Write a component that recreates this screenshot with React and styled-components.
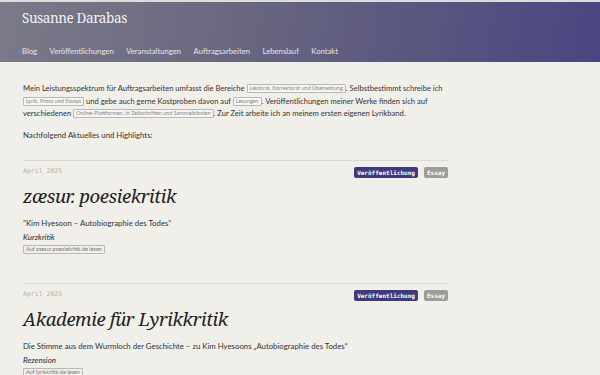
import React from "react";
import styled, { createGlobalStyle } from "styled-components";

const GlobalStyle = createGlobalStyle`
  html, body {
    margin: 0;
    padding: 0;
    background: #f1efea;
  }
  body {
    font-family: Lato, "Noto Sans", sans-serif;
    color: #333;
  }
`;

const Header = styled.header`
  border-top: 2px solid #dcdcdc;
  height: 60px;
  background: linear-gradient(100deg, #7b7a8a 0%, #68677f 40%, #4a4581 100%);
  padding: 0 22px;
  display: flex;
  flex-direction: column;
`;

const SiteTitle = styled.a`
  font-family: "Noto Serif", "DejaVu Serif", serif;
  font-size: 13.5px;
  color: #f2f2f5;
  text-decoration: none;
  margin-top: 7px;
  letter-spacing: -0.4px;
`;

const Nav = styled.nav`
  display: flex;
  gap: 12.5px;
  margin-top: 19px;
`;

const NavLink = styled.a`
  font-size: 7.7px;
  color: #e4e4ec;
  text-decoration: none;
`;

const Main = styled.main`
  width: 425px;
  padding: 20px 0 0 23px;
`;

const Intro = styled.p`
  font-size: 7.6px;
  line-height: 12.6px;
  margin: 0;
`;

const Tag = styled.span`
  display: inline-block;
  font-size: 5.5px;
  line-height: 7px;
  color: #888;
  border: 1px solid #b8b8b8;
  border-radius: 1px;
  padding: 0 2px;
  background: #f6f5f2;
  vertical-align: 1px;
`;

const Lead = styled.p`
  font-size: 7.75px;
  margin: 10px 0 0;
`;

const Entry = styled.article`
  border-top: 1px solid #dcdad5;
  margin-top: ${(p) => (p.$first ? "20px" : "29px")};
  padding-top: 5px;
`;

const MetaRow = styled.div`
  display: flex;
  justify-content: space-between;
  align-items: flex-start;
`;

const Date = styled.span`
  font-family: "DejaVu Sans Mono", monospace;
  font-size: 6.5px;
  color: #b3b1ac;
  margin-top: 1px;
`;

const Badges = styled.div`
  display: flex;
  gap: 6px;
  margin-top: 1px;
`;

const Badge = styled.span`
  font-family: "DejaVu Sans Mono", monospace;
  font-weight: bold;
  font-size: 6px;
  line-height: 7px;
  color: #fff;
  background: ${(p) => (p.$muted ? "#9d9c9a" : "#3f3a7c")};
  padding: 2px 3px;
  border-radius: 2px;
`;

const Title = styled.h2`
  font-family: "Noto Serif", "DejaVu Serif", serif;
  font-style: italic;
  font-weight: normal;
  font-size: 18.5px;
  line-height: 24px;
  color: #222;
  margin: 6px 0 0;
  letter-spacing: -0.4px;
`;

const Subtitle = styled.p`
  font-size: 7.8px;
  margin: 10px 0 0;
`;

const Kind = styled.p`
  font-size: 8px;
  font-style: italic;
  color: #2a2a2a;
  margin: 4px 0 0;
`;

const ReadLink = styled.a`
  display: block;
  width: fit-content;
  margin-top: 3px;
  font-size: 5.5px;
  line-height: 7px;
  color: #777;
  border: 1px solid #b8b8b8;
  border-radius: 1px;
  padding: 0 2px;
  text-decoration: none;
`;

const entries = [
  {
    date: "April 2025",
    title: "zæsur. poesiekritik",
    subtitle: "\"Kim Hyesoon – Autobiographie des Todes\"",
    kind: "Kurzkritik",
    link: "Auf zaesur.poesiekritik.de lesen",
  },
  {
    date: "April 2025",
    title: "Akademie für Lyrikkritik",
    subtitle: "Die Stimme aus dem Wurmloch der Geschichte – zu Kim Hyesoons „Autobiographie des Todes“",
    kind: "Rezension",
    link: "Auf lyrikkritik.de lesen",
  },
];

export default function App() {
  return (
    <>
      <GlobalStyle />
      <Header>
        <SiteTitle href="#">Susanne Darabas</SiteTitle>
        <Nav>
          {["Blog", "Veröffentlichungen", "Veranstaltungen", "Auftragsarbeiten", "Lebenslauf", "Kontakt"].map((n) => (
            <NavLink key={n} href="#">{n}</NavLink>
          ))}
        </Nav>
      </Header>
      <Main>
        <Intro>
          Mein Leistungsspektrum für Auftragsarbeiten umfasst die Bereiche <Tag>Lektorat, Korrektorat und Übersetzung</Tag>. Selbstbestimmt schreibe ich{" "}
          <Tag>Lyrik, Prosa und Essays</Tag> und gebe auch gerne Kostproben davon auf <Tag>Lesungen</Tag>. Veröffentlichungen meiner Werke finden sich auf
          verschiedenen <Tag>Online-Plattformen, in Zeitschriften und Sammelbänden</Tag>. Zur Zeit arbeite ich an meinem ersten eigenen Lyrikband.
        </Intro>
        <Lead>Nachfolgend Aktuelles und Highlights:</Lead>
        {entries.map((e, i) => (
          <Entry key={e.title} $first={i === 0}>
            <MetaRow>
              <Date>{e.date}</Date>
              <Badges>
                <Badge>Veröffentlichung</Badge>
                <Badge $muted>Essay</Badge>
              </Badges>
            </MetaRow>
            <Title>{e.title}</Title>
            <Subtitle>{e.subtitle}</Subtitle>
            <Kind>{e.kind}</Kind>
            <ReadLink href="#">{e.link}</ReadLink>
          </Entry>
        ))}
      </Main>
    </>
  );
}
